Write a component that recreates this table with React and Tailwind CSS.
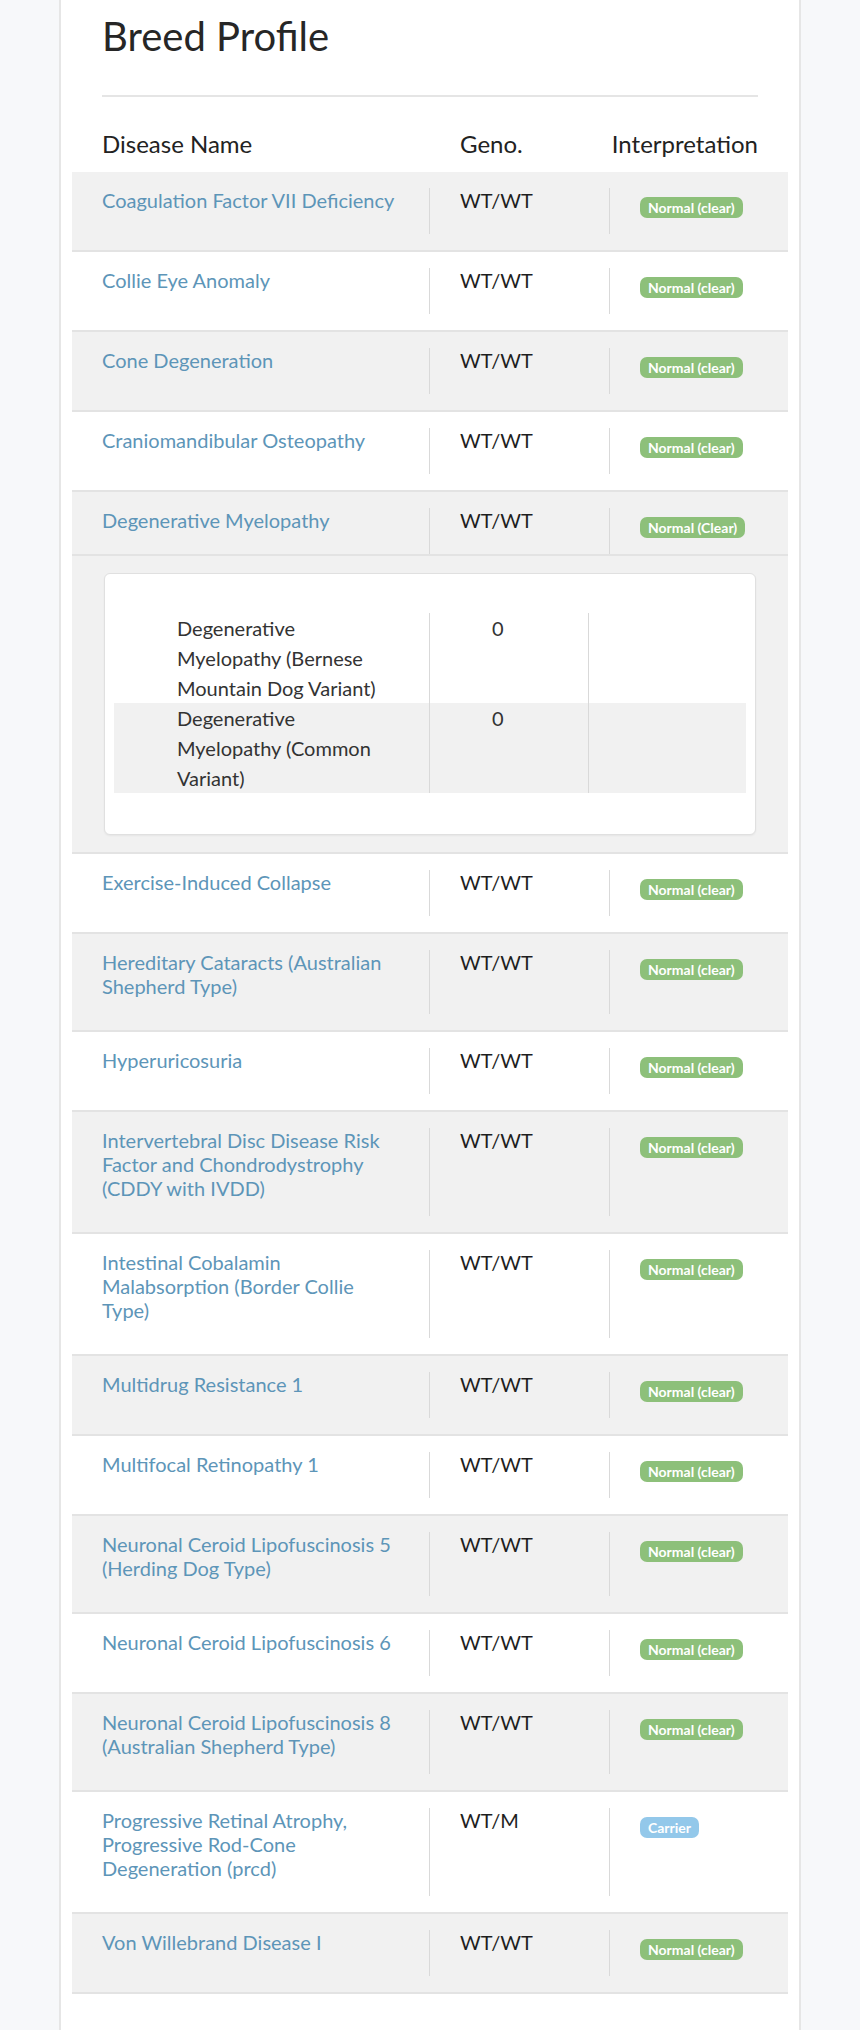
import React from "react";

const rows = [
  { name: "Coagulation Factor VII Deficiency", geno: "WT/WT", result: "Normal (clear)" },
  { name: "Collie Eye Anomaly", geno: "WT/WT", result: "Normal (clear)" },
  { name: "Cone Degeneration", geno: "WT/WT", result: "Normal (clear)" },
  { name: "Craniomandibular Osteopathy", geno: "WT/WT", result: "Normal (clear)" },
  {
    name: "Degenerative Myelopathy",
    geno: "WT/WT",
    result: "Normal (Clear)",
    variants: [
      { name: "Degenerative Myelopathy (Bernese Mountain Dog Variant)", value: "0" },
      { name: "Degenerative Myelopathy (Common Variant)", value: "0" },
    ],
  },
  { name: "Exercise-Induced Collapse", geno: "WT/WT", result: "Normal (clear)" },
  { name: "Hereditary Cataracts (Australian Shepherd Type)", geno: "WT/WT", result: "Normal (clear)" },
  { name: "Hyperuricosuria", geno: "WT/WT", result: "Normal (clear)" },
  {
    name: "Intervertebral Disc Disease Risk Factor and Chondrodystrophy (CDDY with IVDD)",
    geno: "WT/WT",
    result: "Normal (clear)",
  },
  { name: "Intestinal Cobalamin Malabsorption (Border Collie Type)", geno: "WT/WT", result: "Normal (clear)" },
  { name: "Multidrug Resistance 1", geno: "WT/WT", result: "Normal (clear)" },
  { name: "Multifocal Retinopathy 1", geno: "WT/WT", result: "Normal (clear)" },
  { name: "Neuronal Ceroid Lipofuscinosis 5 (Herding Dog Type)", geno: "WT/WT", result: "Normal (clear)" },
  { name: "Neuronal Ceroid Lipofuscinosis 6", geno: "WT/WT", result: "Normal (clear)" },
  { name: "Neuronal Ceroid Lipofuscinosis 8 (Australian Shepherd Type)", geno: "WT/WT", result: "Normal (clear)" },
  {
    name: "Progressive Retinal Atrophy, Progressive Rod-Cone Degeneration (prcd)",
    geno: "WT/M",
    result: "Carrier",
  },
  { name: "Von Willebrand Disease I", geno: "WT/WT", result: "Normal (clear)" },
];

function Badge({ label }) {
  const carrier = label === "Carrier";
  return (
    <span
      className={`block rounded-[7px] px-[8px] text-[14px] font-bold leading-[21px] text-white ${
        carrier ? "bg-[#93c8ea]" : "bg-[#8dc07a]"
      }`}
    >
      {label}
    </span>
  );
}

function Variants({ items }) {
  return (
    <div className="border-b-2 border-[#e3e3e3] bg-[#f1f1f1] px-[32px] py-[17px]">
      <div className="rounded-[6px] border border-[#e0e0e0] bg-white px-[9px] pt-[39px] pb-[41px] shadow-[0_1px_2px_rgba(0,0,0,0.05)]">
        {items.map((v, i) => (
          <div
            key={v.name}
            className={`grid grid-cols-[315px_159px_1fr] text-[20px] leading-[30px] text-[#333] ${
              i % 2 ? "bg-[#f1f1f1]" : ""
            }`}
          >
            <div className="pl-[63px] pr-[40px]">{v.name}</div>
            <div className="border-l border-[#d9d9d9] pl-[62px]">{v.value}</div>
            <div className="border-l border-[#d9d9d9]"></div>
          </div>
        ))}
      </div>
    </div>
  );
}

export default function App() {
  return (
    <div className="min-h-screen bg-[#f7f8fa] font-['Lato','Noto_Sans',sans-serif]">
      <div className="ml-[59px] w-[742px] border-x-2 border-[#e6e6e6] bg-white px-[11px] pb-[40px]">
        <div className="px-[30px] pt-[12px]">
          <h1 className="text-[40px] leading-[48px] font-normal text-[#262626]">Breed Profile</h1>
          <div className="mt-[35px] h-[2px] bg-[#e5e5e5]"></div>
        </div>

        <div className="mt-[33px] mb-[14px] grid grid-cols-[357px_180px_1fr] text-[24px] leading-[28px] text-[#222]">
          <div className="pl-[30px]">Disease Name</div>
          <div className="pl-[31px]">Geno.</div>
          <div className="pr-[30px] text-right">Interpretation</div>
        </div>

        {rows.map((r, i) => (
          <React.Fragment key={r.name}>
            <div
              className={`grid grid-cols-[357px_180px_1fr] border-b-2 border-[#e3e3e3] pt-[16px] ${
                r.variants ? "pb-0" : "pb-[16px]"
              } ${i % 2 === 0 ? "bg-[#f1f1f1]" : "bg-white"}`}
            >
              <div className="pl-[30px] pr-[24px] pb-[16px] text-[20px] leading-[24px] text-[#5d95b8]">
                {r.name}
              </div>
              <div className="border-l border-[#d9d9d9] pl-[30px] text-[20px] leading-[24px] text-[#1e1e1e]">
                {r.geno}
              </div>
              <div className="flex items-start border-l border-[#d9d9d9] pl-[30px] pt-[9px] pb-[16px]">
                <Badge label={r.result} />
              </div>
            </div>
            {r.variants && <Variants items={r.variants} />}
          </React.Fragment>
        ))}
      </div>
    </div>
  );
}
